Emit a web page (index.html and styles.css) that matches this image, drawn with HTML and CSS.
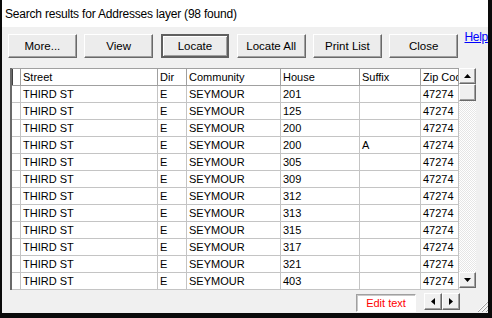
FILE: index.html
```html
<!DOCTYPE html>
<html lang="en">
<head>
    <meta charset="UTF-8">
    <title>Search results for Addresses layer</title>
    <link rel="stylesheet" href="styles.css">
</head>
<body>
    <div class="window">
        <div class="titlebar">Search results for Addresses layer (98 found)</div>
        <div class="toolbar">
            <button class="btn">More...</button>
            <button class="btn">View</button>
            <button class="btn default">Locate</button>
            <button class="btn">Locate All</button>
            <button class="btn">Print List</button>
            <button class="btn">Close</button>
            <a class="help" href="#">Help</a>
        </div>
        <div class="grid">
            <div class="grid-view">
                <div class="row head">
                    <div class="cell sel"></div><div class="cell">Street</div><div class="cell">Dir</div><div class="cell">Community</div><div class="cell">House</div><div class="cell">Suffix</div><div class="cell">Zip Code</div>
                </div>
                <div class="row"><div class="cell sel"></div><div class="cell">THIRD ST</div><div class="cell">E</div><div class="cell">SEYMOUR</div><div class="cell">201</div><div class="cell"></div><div class="cell">47274</div></div>
                <div class="row"><div class="cell sel"></div><div class="cell">THIRD ST</div><div class="cell">E</div><div class="cell">SEYMOUR</div><div class="cell">125</div><div class="cell"></div><div class="cell">47274</div></div>
                <div class="row"><div class="cell sel"></div><div class="cell">THIRD ST</div><div class="cell">E</div><div class="cell">SEYMOUR</div><div class="cell">200</div><div class="cell"></div><div class="cell">47274</div></div>
                <div class="row"><div class="cell sel"></div><div class="cell">THIRD ST</div><div class="cell">E</div><div class="cell">SEYMOUR</div><div class="cell">200</div><div class="cell">A</div><div class="cell">47274</div></div>
                <div class="row"><div class="cell sel"></div><div class="cell">THIRD ST</div><div class="cell">E</div><div class="cell">SEYMOUR</div><div class="cell">305</div><div class="cell"></div><div class="cell">47274</div></div>
                <div class="row"><div class="cell sel"></div><div class="cell">THIRD ST</div><div class="cell">E</div><div class="cell">SEYMOUR</div><div class="cell">309</div><div class="cell"></div><div class="cell">47274</div></div>
                <div class="row"><div class="cell sel"></div><div class="cell">THIRD ST</div><div class="cell">E</div><div class="cell">SEYMOUR</div><div class="cell">312</div><div class="cell"></div><div class="cell">47274</div></div>
                <div class="row"><div class="cell sel"></div><div class="cell">THIRD ST</div><div class="cell">E</div><div class="cell">SEYMOUR</div><div class="cell">313</div><div class="cell"></div><div class="cell">47274</div></div>
                <div class="row"><div class="cell sel"></div><div class="cell">THIRD ST</div><div class="cell">E</div><div class="cell">SEYMOUR</div><div class="cell">315</div><div class="cell"></div><div class="cell">47274</div></div>
                <div class="row"><div class="cell sel"></div><div class="cell">THIRD ST</div><div class="cell">E</div><div class="cell">SEYMOUR</div><div class="cell">317</div><div class="cell"></div><div class="cell">47274</div></div>
                <div class="row"><div class="cell sel"></div><div class="cell">THIRD ST</div><div class="cell">E</div><div class="cell">SEYMOUR</div><div class="cell">321</div><div class="cell"></div><div class="cell">47274</div></div>
                <div class="row"><div class="cell sel"></div><div class="cell">THIRD ST</div><div class="cell">E</div><div class="cell">SEYMOUR</div><div class="cell">403</div><div class="cell"></div><div class="cell">47274</div></div>
            </div>
            <div class="vscroll">
                <div class="sb-btn"><svg width="7" height="4" viewBox="0 0 7 4"><path d="M3.5 0 L7 4 L0 4 Z" fill="#000"/></svg></div>
                <div class="sb-thumb"></div>
                <div class="sb-track"></div>
                <div class="sb-btn down"><svg width="7" height="4" viewBox="0 0 7 4"><path d="M0 0 L7 0 L3.5 4 Z" fill="#000"/></svg></div>
            </div>
        </div>
        <div class="statusbar">
            <div class="edit-text">Edit text</div>
            <div class="hscroll">
                <div class="sb-btn wide"><svg width="4" height="7" viewBox="0 0 4 7"><path d="M4 0 L4 7 L0 3.5 Z" fill="#000"/></svg></div>
                <div class="sb-btn wide"><svg width="4" height="7" viewBox="0 0 4 7"><path d="M0 0 L4 3.5 L0 7 Z" fill="#000"/></svg></div>
            </div>
            <svg class="grip" width="11" height="11" viewBox="0 0 11 11">
                <path d="M10 1 L1 10 M10 5 L5 10 M10 9 L9 10" stroke="#fff" stroke-width="1"/>
                <path d="M11 1 L1 11 M11 5 L5 11 M11 9 L9 11" stroke="#a0a0a0" stroke-width="1"/>
            </svg>
        </div>
    </div>
</body>
</html>
```

FILE: styles.css
```css
body {
    margin: 0;
    background: #0a0a0a;
    font-family: 'Liberation Sans', Arial, sans-serif;
}
.window {
    margin-left: 2px;
    width: 486px;
    height: 313px;
    background: #f0f0f0;
    display: flex;
    flex-direction: column;
    overflow: hidden;
}
.titlebar {
    height: 27px;
    line-height: 28px;
    background: #fff;
    padding-left: 3px;
    font-size: 12px;
    letter-spacing: -0.2px;
    color: #000;
    white-space: nowrap;
}
.toolbar {
    display: flex;
    gap: 7.4px;
    padding: 7px 0 0 6px;
}
.btn {
    width: 69px;
    height: 24px;
    margin: 0;
    padding: 0;
    background: #ececec;
    border: 1px solid;
    border-color: #fff #696969 #696969 #fff;
    box-shadow: inset -1px -1px #a0a0a0;
    font-family: 'Liberation Sans', Arial, sans-serif;
    font-size: 11.5px;
    color: #000;
}
.btn.default {
    border: 2px solid #5f5f5f;
    box-shadow: inset 1px 1px #fff, inset -1px -1px #a0a0a0;
}
.help {
    align-self: flex-start;
    margin: -4px 0 0 -1px;
    font-size: 12px;
    letter-spacing: -0.3px;
    color: #0000ff;
    text-decoration: underline;
}
.grid {
    display: flex;
    margin: 10px 0 0 8px;
    width: 466px;
    border-left: 2px solid #6a6a6a;
}
.grid-view {
    width: 447px;
    border-top: 1px solid #a0a0a0;
    background: #fff;
    overflow: hidden;
}
.row {
    display: grid;
    grid-template-columns: 9px 137px 29px 94px 79px 61px 38px;
    height: 17px;
    box-sizing: border-box;
    border-bottom: 1px solid #c4c4c4;
}
.row.head {
    border-bottom-color: #a0a0a0;
}
.cell {
    border-right: 1px solid #c4c4c4;
    padding-left: 2px;
    font-size: 11px;
    line-height: 16px;
    color: #000;
    white-space: nowrap;
    overflow: hidden;
}
.cell.sel {
    padding: 0;
}
.head .cell {
    border-right-color: #a0a0a0;
}
.head .cell.sel {
    box-shadow: inset 1px 0 #404040;
}
.vscroll {
    width: 17px;
    display: flex;
    flex-direction: column;
}
.sb-btn {
    width: 17px;
    height: 16px;
    box-sizing: border-box;
    background: #f0f0f0;
    border: 1px solid;
    border-color: #fff #696969 #696969 #fff;
    box-shadow: inset -1px -1px #a0a0a0;
    display: flex;
    align-items: center;
    justify-content: center;
}
.sb-thumb {
    height: 17px;
    box-sizing: border-box;
    background: #f0f0f0;
    border: 1px solid;
    border-color: #fff #696969 #696969 #fff;
    box-shadow: inset -1px -1px #a0a0a0;
}
.sb-track {
    flex: 1;
    background: repeating-conic-gradient(#fff 0 25%, #e6e6e6 0 50%) 0 0 / 2px 2px;
}
.sb-btn.down {
    margin-bottom: 2px;
}
.statusbar {
    display: flex;
    align-items: flex-start;
    justify-content: flex-end;
    flex: 1;
    padding-top: 4px;
}
.edit-text {
    width: 60px;
    height: 18px;
    box-sizing: border-box;
    background: #fff;
    border: 1px solid;
    border-color: #a0a0a0 #fff #fff #a0a0a0;
    box-shadow: inset 1px 1px #c8c8c8;
    color: #ff0000;
    font-size: 11px;
    line-height: 16px;
    text-align: center;
}
.hscroll {
    display: flex;
    margin: -1px 0 0 8px;
}
.sb-btn.wide {
    width: 18px;
    height: 17px;
}
.grip {
    align-self: flex-end;
    margin: 0 0 1px 17px;
}
```
